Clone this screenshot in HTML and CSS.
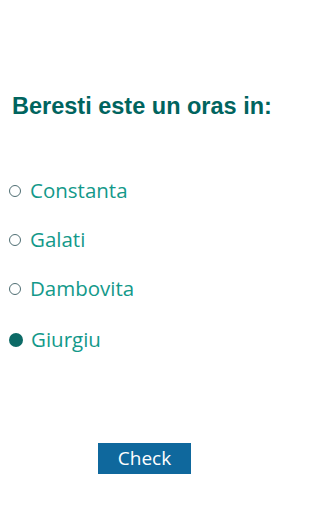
FILE: index.html
```html
<!DOCTYPE html>
<html>
<head>
<meta charset="utf-8">
<link rel="stylesheet" href="styles.css">
</head>
<body>
<div class="page">
  <h1 class="question">Beresti este un oras in:</h1>
  <ul class="options">
    <li class="option"><span class="radio"></span><span class="label">Constanta</span></li>
    <li class="option"><span class="radio"></span><span class="label">Galati</span></li>
    <li class="option"><span class="radio"></span><span class="label">Dambovita</span></li>
    <li class="option selected"><span class="radio"></span><span class="label">Giurgiu</span></li>
  </ul>
  <div class="actions"><button class="check">Check</button></div>
</div>
</body>
</html>
```
FILE: styles.css
```css
html, body { margin: 0; padding: 0; background: #fff; }
.page { width: 293px; height: 512px; display: flex; flex-direction: column; }
.question {
  margin: 92px 0 0 12px;
  font-family: "Liberation Sans", Arial, sans-serif;
  font-weight: bold;
  font-size: 23.5px;
  line-height: 28px;
  color: #00645e;
}
.options { list-style: none; margin: 56px 0 0 0; padding: 0; display: flex; flex-direction: column; gap: 21px; }
.option { display: flex; align-items: center; height: 28px; padding-left: 9px; }
.radio {
  width: 10px; height: 10px; border: 1px solid #4f6e73; border-radius: 50%;
  box-sizing: content-box; margin-right: 9px; flex: none; margin-top: 2px;
}
.selected { margin-top: 2px; }
.selected .radio { width: 14px; height: 14px; border: none; background: #0c6a66; margin-right: 8px; }
.label {
  font-family: "Open Sans", sans-serif;
  font-size: 20.5px;
  color: #13998a;
  line-height: 28px;
}
.actions { display: flex; justify-content: flex-start; padding-left: 98px; margin-top: 90px; }
.check {
  width: 93px; height: 31px; border: none; background: #0f689d; color: #fff;
  font-family: "Open Sans", sans-serif; font-size: 19px; padding: 0; line-height: 31px;
}
```
